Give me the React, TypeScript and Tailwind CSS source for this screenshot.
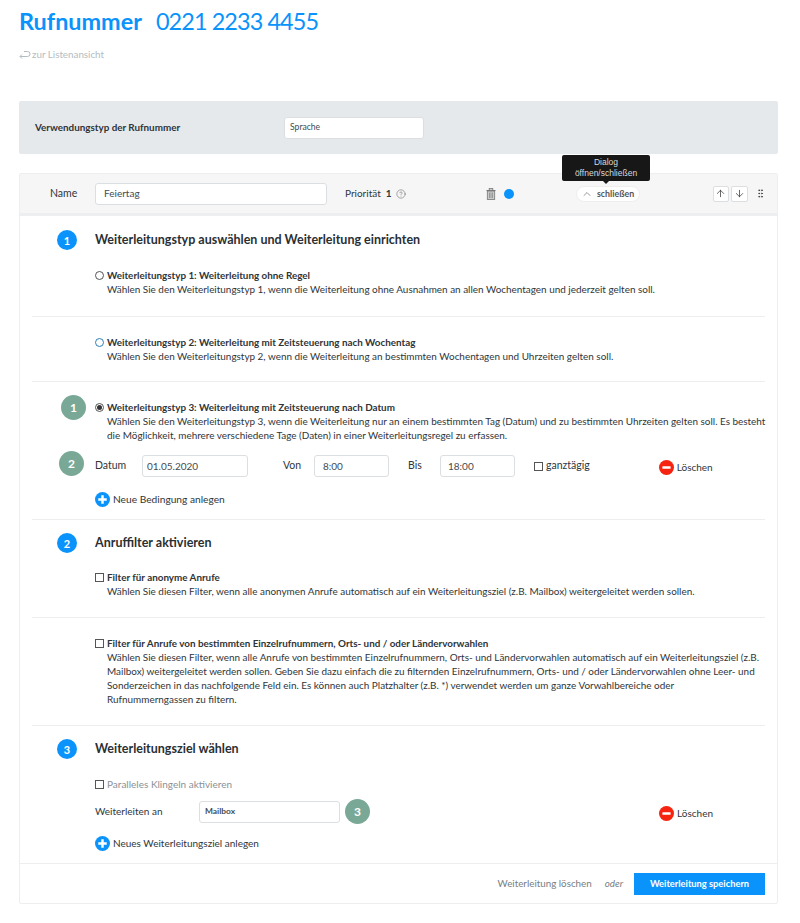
import { ArrowDown, ArrowUp, ChevronUp, CircleHelp, GripVertical } from "lucide-react";
import type { ReactNode } from "react";

function StepBadge({ n }: { n: number }) {
  return (
    <span className="flex h-5 w-5 items-center justify-center rounded-full bg-[#0a93fb] text-[11px] font-bold leading-none text-white">
      {n}
    </span>
  );
}

function HintBadge({ n, className }: { n: number; className?: string }) {
  return (
    <span className={`flex h-[25px] w-[25px] items-center justify-center rounded-full bg-[#7aa896] text-[12px] font-bold leading-none text-white ${className ?? ""}`}>
      {n}
    </span>
  );
}

function Plus() {
  return (
    <svg viewBox="0 0 16 16" className="h-[15px] w-[15px] shrink-0">
      <circle cx="8" cy="8" r="8" fill="#0a93fb" />
      <path d="M8 3.5v9M3.5 8h9" stroke="#fff" strokeWidth="2.6" />
    </svg>
  );
}

function Minus() {
  return (
    <svg viewBox="0 0 16 16" className="h-[15px] w-[15px] shrink-0">
      <circle cx="8" cy="8" r="8" fill="#f5230f" />
      <rect x="3.6" y="6.6" width="8.8" height="2.8" rx="0.6" fill="#fff" />
    </svg>
  );
}

function BackArrow() {
  return (
    <svg viewBox="0 0 12 10" fill="none" className="h-[10px] w-[12px] shrink-0 stroke-[#b3bcc2]">
      <path d="M1 7.5h7.5a2.5 2.5 0 0 0 0-5H5" strokeWidth="1" />
      <path d="M3 5.5 1 7.5l2 2" strokeWidth="1" />
    </svg>
  );
}

function TrashIcon() {
  return (
    <svg viewBox="0 0 10 12" className="ml-[80px] h-[12px] w-[10px] shrink-0">
      <rect x="3.2" y="0.5" width="3.6" height="1.6" fill="none" stroke="#777" strokeWidth="0.8" />
      <rect x="0.5" y="2" width="9" height="1" fill="#777" />
      <rect x="1.3" y="3" width="7.4" height="8.5" fill="#c8cacc" stroke="#777" strokeWidth="0.8" />
      <path d="M3.5 4.5v5.5M5 4.5v5.5M6.5 4.5v5.5" stroke="#777" strokeWidth="0.6" />
    </svg>
  );
}

function Field({ value, className }: { value: string; className: string }) {
  return (
    <div className={`flex h-[22px] items-center rounded-[3px] border border-[#dcdfe1] bg-white text-[#444b50] ${className}`}>
      {value}
    </div>
  );
}

function Box({ className }: { className?: string }) {
  return <span className={`h-[9px] w-[9px] shrink-0 border border-[#555] bg-white ${className ?? ""}`} />;
}

function Option({ mark, title, children }: { mark: ReactNode; title: string; children: ReactNode }) {
  return (
    <div className="flex gap-[3px]">
      <div className="flex h-[14px] w-[9px] items-center justify-center">{mark}</div>
      <div className="flex-1">
        <p className="text-[9.85px] font-bold leading-[14px] text-[#2f3437]">{title}</p>
        <p className="-mr-[4px] text-[9.93px] leading-[14px] text-[#30363a]">{children}</p>
      </div>
    </div>
  );
}

function Heading({ n, children }: { n: number; children: ReactNode }) {
  return (
    <div className="flex items-center">
      <div className="flex w-[63px] justify-center pl-[7px]">
        <StepBadge n={n} />
      </div>
      <h2 className="text-[12.5px] font-bold leading-5 text-[#2a2f33]">{children}</h2>
    </div>
  );
}

function Radio({ color, dot }: { color: string; dot?: boolean }) {
  return (
    <span className={`flex h-[9px] w-[9px] shrink-0 items-center justify-center rounded-full border ${color}`}>
      {dot && <span className="h-[5px] w-[5px] rounded-full bg-[#333]" />}
    </span>
  );
}

export default function App() {
  return (
    <div className="min-h-[923px] bg-white px-[19px] pr-[22px] font-['Lato',sans-serif] text-[#30363a]">
      <h1 className="flex gap-[14px] pt-[7px] text-[23.4px] leading-[28px] text-[#0a93fb]">
        <span className="font-bold">Rufnummer</span>
        <span className="tracking-[-0.9px]">0221 2233 4455</span>
      </h1>
      <a className="mt-[12px] flex h-[14px] items-center gap-[1px] text-[9.8px] text-[#b3bcc2]">
        <BackArrow />
        zur Listenansicht
      </a>

      <div className="mt-[40px] flex h-[53px] items-center rounded-[2px] bg-[#e6e9ec] pl-[16px]">
        <span className="w-[249px] text-[9.85px] font-bold text-[#2f3437]">Verwendungstyp der Rufnummer</span>
        <Field value="Sprache" className="w-[140px] pl-[5px] text-[8.6px]" />
      </div>

      <div className="relative mt-[19px] rounded-[2px] border border-[#edeef0]">
        {/* Header */}
        <div className="relative flex h-[42px] items-center border-b-[3px] border-[#edeef0] bg-[#f6f6f7]">
          <span className="w-[75px] pl-[30px] text-[10.5px] text-[#30363a]">Name</span>
          <Field value="Feiertag" className="w-[232px] pl-[8px] text-[10px]" />
          <span className="ml-[18px] text-[10px]">Priorität</span>
          <span className="ml-[5px] text-[10px] font-bold">1</span>
          <CircleHelp size={10} strokeWidth={1.2} className="ml-[4px] text-[#555]" />
          <TrashIcon />
          <span className="ml-[8px] h-[10px] w-[10px] rounded-full bg-[#0a93fb]" />
          <div className="ml-[62px] flex h-[16px] w-[64px] items-center justify-center gap-[4px] rounded-full border border-[#eeeeee] bg-white text-[8.8px] font-bold text-[#555]">
            <ChevronUp size={12} strokeWidth={1.2} />
            schließen
          </div>
          <div className="ml-[73px] flex gap-[2px]">
            <span className="flex h-[16px] w-[16px] items-center justify-center rounded-[2px] border border-[#dcdfe1] bg-white">
              <ArrowUp size={11} strokeWidth={1.6} className="text-[#333]" />
            </span>
            <span className="flex h-[16px] w-[17px] items-center justify-center rounded-[2px] border border-[#dcdfe1] bg-white">
              <ArrowDown size={11} strokeWidth={1.6} className="text-[#333]" />
            </span>
          </div>
          <GripVertical size={11} strokeWidth={2} className="ml-[7px] text-[#444]" />

          {/* Tooltip */}
          <div className="absolute left-[542px] top-[-19px] flex h-[26px] w-[88px] flex-col items-center justify-center rounded-[2px] bg-[#171717] text-center font-['Liberation_Sans',sans-serif] text-[8.5px] leading-[11px] text-[#d9d9d9]">
            <span>Dialog</span>
            <span>öffnen/schließen</span>
            <span className="absolute bottom-[-3px] left-[41px] h-0 w-0 border-x-[3px] border-t-[3px] border-x-transparent border-t-[#171717]" />
          </div>
        </div>

        {/* Section 1 */}
        <div className="mx-[12px] border-b border-[#edeef0]">
          <div className="pt-[14px]">
            <Heading n={1}>Weiterleitungstyp auswählen und Weiterleitung einrichten</Heading>
          </div>
          <div className="border-b border-[#edeef0] pb-[20px] pl-[63px] pt-[18px]">
            <Option mark={<Radio color="border-[#555]" />} title="Weiterleitungstyp 1: Weiterleitung ohne Regel">
              Wählen Sie den Weiterleitungstyp 1, wenn die Weiterleitung ohne Ausnahmen an allen Wochentagen und jederzeit gelten soll.
            </Option>
          </div>
          <div className="border-b border-[#edeef0] pb-[18px] pl-[63px] pt-[18px]">
            <Option mark={<Radio color="border-[#2d7fb8]" />} title="Weiterleitungstyp 2: Weiterleitung mit Zeitsteuerung nach Wochentag">
              Wählen Sie den Weiterleitungstyp 2, wenn die Weiterleitung an bestimmten Wochentagen und Uhrzeiten gelten soll.
            </Option>
          </div>
          <div className="relative pb-[12px] pl-[63px] pt-[18px]">
            <HintBadge n={1} className="absolute left-[29px] top-[13px]" />
            <HintBadge n={2} className="absolute left-[27px] top-[69px]" />
            <Option mark={<Radio color="border-[#555]" dot />} title="Weiterleitungstyp 3: Weiterleitung mit Zeitsteuerung nach Datum">
              Wählen Sie den Weiterleitungstyp 3, wenn die Weiterleitung nur an einem bestimmten Tag (Datum) und zu bestimmten Uhrzeiten gelten soll. Es besteht die Möglichkeit, mehrere verschiedene Tage (Daten) in einer Weiterleitungsregel zu erfassen.
            </Option>
            <div className="mt-[13px] flex items-center text-[10.5px]">
              <span className="w-[47px]">Datum</span>
              <Field value="01.05.2020" className="w-[106px] pl-[4px] text-[10px]" />
              <span className="ml-[35px] w-[31px]">Von</span>
              <Field value="8:00" className="w-[75px] pl-[8px] text-[10px]" />
              <span className="ml-[19px] w-[32px]">Bis</span>
              <Field value="18:00" className="w-[75px] pl-[7px] text-[10px]" />
              <Box className="ml-[19px]" />
              <span className="ml-[3px]">ganztägig</span>
              <span className="ml-[69px] mt-[2px] flex items-center gap-[3px] text-[10px]">
                <Minus />
                Löschen
              </span>
            </div>
            <div className="mt-[15px] flex items-center gap-[3px] text-[10.2px]">
              <Plus />
              Neue Bedingung anlegen
            </div>
          </div>
        </div>

        {/* Section 2 */}
        <div className="mx-[12px] border-b border-[#edeef0]">
          <div className="pt-[13px]">
            <Heading n={2}>Anruffilter aktivieren</Heading>
          </div>
          <div className="border-b border-[#edeef0] pb-[19px] pl-[63px] pt-[17px]">
            <Option mark={<Box />} title="Filter für anonyme Anrufe">
              Wählen Sie diesen Filter, wenn alle anonymen Anrufe automatisch auf ein Weiterleitungsziel (z.B. Mailbox) weitergeleitet werden sollen.
            </Option>
          </div>
          <div className="pb-[19px] pl-[63px] pt-[18px]">
            <Option mark={<Box />} title="Filter für Anrufe von bestimmten Einzelrufnummern, Orts- und / oder Ländervorwahlen">
              Wählen Sie diesen Filter, wenn alle Anrufe von bestimmten Einzelrufnummern, Orts- und Ländervorwahlen automatisch auf ein Weiterleitungsziel (z.B. Mailbox) weitergeleitet werden sollen. Geben Sie dazu einfach die zu filternden Einzelrufnummern, Orts- und / oder Ländervorwahlen ohne Leer- und Sonderzeichen in das nachfolgende Feld ein. Es können auch Platzhalter (z.B. *) verwendet werden um ganze Vorwahlbereiche oder<br />Rufnummerngassen zu filtern.
            </Option>
          </div>
        </div>

        {/* Section 3 */}
        <div className="mx-[12px] pb-[12px] pt-[13px]">
          <Heading n={3}>Weiterleitungsziel wählen</Heading>
          <div className="pl-[63px]">
            <div className="mt-[18px] flex items-center gap-[3px] text-[10px] text-[#8a9196]">
              <Box />
              Paralleles Klingeln aktivieren
            </div>
            <div className="mt-[7px] flex items-center text-[10px]">
              <span className="w-[104px]">Weiterleiten an</span>
              <Field value="Mailbox" className="w-[141px] pl-[5px] text-[8.4px] font-bold" />
              <HintBadge n={3} className="ml-[5px]" />
              <span className="ml-[289px] mt-[3px] flex items-center gap-[3px]">
                <Minus />
                Löschen
              </span>
            </div>
            <div className="mt-[12px] flex items-center gap-[3px] text-[10px]">
              <Plus />
              Neues Weiterleitungsziel anlegen
            </div>
          </div>
        </div>

        {/* Footer */}
        <div className="flex h-[40px] items-center justify-end border-t border-[#edeef0] pr-[12px] text-[9.8px] text-[#777d82]">
          Weiterleitung löschen
          <em className="ml-[13px]">oder</em>
          <button className="ml-[11px] h-[22px] w-[131px] bg-[#0a93fb] text-[9.3px] font-bold text-white">Weiterleitung speichern</button>
        </div>
      </div>
    </div>
  );
}
